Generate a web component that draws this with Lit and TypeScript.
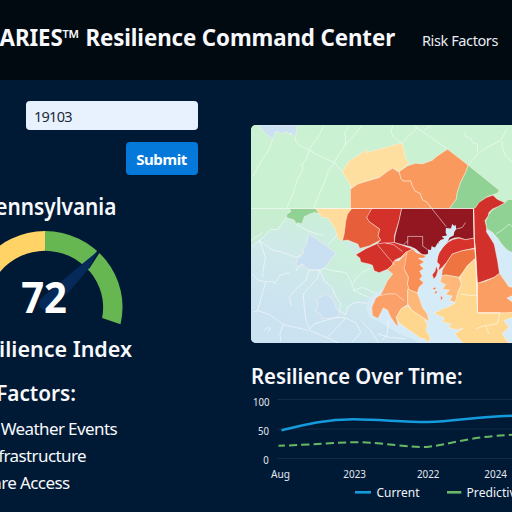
import { LitElement, html, svg, css } from "lit";
import { customElement } from "lit/decorators.js";

type Region = { fill: string; d: string };

const REGIONS: Region[] = [
  // upper-left lake district
  { fill: "#cbe1f1", d: "M35 12L62 40 80 55 90 30 105 38 120 32 135 42 132 34 140 40 148 50 155 12Z" },
  // pale blue inland counties
  { fill: "#c9dff2", d: "M188 338L235 370 270 398 235 442 225 448 190 448 170 430 158 438 150 432 152 418 172 400 175 380 182 370Z" },
  { fill: "#c9dff2", d: "M240 520L262 535 270 560 282 580 270 592 230 594 222 578 208 570 218 550 212 536Z" },
  // northern belt
  { fill: "#ffdf9f", d: "M289 152L310 120 350 95 366 84 362 96 380 90 468 66 475 85 478 110 490 126 461 152 441 142 420 160 401 168 360 181 335 190 316 202 312 190Z" },
  { fill: "#fa9a5f", d: "M314 263V205L335 190 360 182 401 170 425 152 441 142 461 155 465 172 472 180 495 180 500 195 508 210 524 218 530 236 545 245 558 263Z" },
  { fill: "#fa995d", d: "M461 152L485 135 510 127 530 129 560 118 575 105 606 85 668 133 660 155 645 185 635 215 632 235 612 263H558L545 245 530 236 524 218 508 210 500 195 495 180 472 180 465 172Z" },
  { fill: "#90d294", d: "M668 133L761 208 755 218 740 222 720 230 700 248 690 263H612L632 235 635 215 645 185 660 155Z" },
  { fill: "#90d294", d: "M130 263H210L228 279 205 275 190 280 175 288 168 310 158 306 150 308 145 298 122 290 122 282 135 272Z" },
  { fill: "#ffdc9b", d: "M208 263H318L305 285 298 320 295 345 290 360 276 354 270 328 252 300 246 290 230 290Z" },
  // centre
  { fill: "#e75f3a", d: "M318 263H378L372 280 363 290 370 302 385 313 402 325 397 345 405 358 370 376 342 383 336 370 320 364 306 358 290 360 295 340 300 300 305 280Z" },
  { fill: "#d4312b", d: "M378 263H468L460 300 446 345 446 365 501 385 480 395 465 410 448 418 438 435 425 446 400 456 385 450 380 434 370 430 352 426 345 424 342 412 330 402 360 384 395 368 405 358 397 345 402 325 385 313 370 302 363 290Z" },
  { fill: "#921721", d: "M468 263H684L686 352 660 357 640 350 626 352 612 358 602 366 592 362 580 362 578 375 562 383 552 392 545 402 530 402 510 385 495 378 470 372 446 365 448 345 460 300Z" },
  { fill: "#f98f56", d: "M501 385L512 396 540 405 536 412 518 413 536 424 522 432 534 444 522 452 530 466 522 476 534 486 520 500 515 517 490 508 485 490 488 470 475 445 460 420 480 395Z" },
  { fill: "#fba068", d: "M484 396L460 420 446 420 438 435 425 447 441 460 425 480 416 500 405 522 390 532 378 560 380 585 396 594 406 576 412 562 425 568 435 590 450 612 458 618 452 590 466 565 486 552 486 510 490 508 485 490 488 470 475 445Z" },
  { fill: "#fdb878", d: "M486 505L515 517 522 535 530 560 545 580 550 602 536 594 518 582 500 570 486 550Z" },
  { fill: "#fed68e", d: "M466 565L486 556 500 570 518 582 536 594 545 615 541 630 553 650 551 665 540 658 520 650 500 635 480 622 458 605 452 590Z" },
  // peninsula
  { fill: "#90d294", d: "M801 236L788 236 778 246 760 256 740 268 730 280 720 302 724 324 742 336 756 352 768 370 785 388 801 396Z" },
  { fill: "#d2302b", d: "M684 263L690 260 700 245 722 230 742 223 755 235 778 246 760 256 740 265 730 275 728 285 718 300 722 315 724 335 746 370 756 420 762 458 746 470 696 488 690 400 686 352Z" },
  { fill: "#fb9e63", d: "M696 488L720 482 746 470 762 458 776 478 790 498 801 500V525L784 532 801 545V577H696Z" },
  { fill: "#d7322c", d: "M622 356L640 352 660 357 686 352 687 382 650 390 620 400 604 424 590 440 578 450 582 432 574 424 578 398 590 380 608 364Z" },
  { fill: "#ee7542", d: "M687 384L690 412 665 435 652 455 640 470 600 463 588 466 590 448 604 424 620 400 650 390Z" },
  { fill: "#fdb87a", d: "M588 466L600 463 640 470 648 492 638 512 630 545 612 540 620 526 600 522 612 508 590 506 600 492 584 484Z" },
  { fill: "#fed891", d: "M668 433L690 414 694 488 696 577H780L801 575V590L775 600 790 620 770 640 790 669H655L640 655 628 640 654 622 634 628 610 622 616 610 590 604 596 592 565 578 590 565 606 560 628 548 638 512 648 492 643 472 652 455Z" },
  // islands
  { fill: "#d7322c", d: "M572 436L577 450 572 466 564 476 560 462 568 452Z" },
  { fill: "#ec6a48", d: "M560 502L572 500 568 508 576 514 566 522 570 510ZM584 524L592 532 586 540Z" },
];

const WATER =
  "M600 335L601 322 616 323 620 310 626 316 630 312 632 325 626 334 624 344 612 350 606 362 594 378 582 395 574 415 566 436 556 440 550 425 552 410 538 404 548 399 546 386 556 388 558 376 568 382 576 366 580 372 584 358 596 354 588 347 604 344Z" +
  "M720 330L742 338 756 354 768 370 785 388 801 398V494L788 490 776 474 762 456 758 420 748 374 736 350Z";

const BORDERS = [
  "M15 263H684",
  "M80 55L70 85 50 115 40 130 30 150 20 168",
  "M148 50L150 62 165 75 190 88 182 112 168 132 172 145 155 175 140 220 122 263",
  "M235 12L222 40 200 70 190 88 230 110 265 124 289 152",
  "M265 124L245 155 238 180 222 215 203 263",
  "M265 124L298 72 325 42 350 12M298 72L300 45 296 38 310 12",
  "M441 12L436 35 446 50 456 57 468 66 514 20 606 85M536 28L556 12M514 20L505 12",
  "M668 133L696 100 720 82 766 58 785 22M770 60L770 78 780 105 801 125",
  "M658 35L661 48 676 52 681 65 696 70 696 95",
  "M18 378L40 360 75 325 95 327 122 290M40 360L80 388 110 395 150 410 165 403",
  "M40 360L52 390 58 412 50 455 52 470",
  "M18 460L36 478 60 484 52 510 35 570 20 575M60 484L82 482 86 490 102 464 130 456M35 570L70 582 112 612 145 620 190 630",
  "M190 448L180 480 155 500 130 530 136 555M190 448H222L215 472 190 500 172 520 175 560 180 600 192 626 205 610 270 590 300 592",
  "M225 448L232 442 270 452 300 455 315 480 325 510 345 520 370 530M222 448L235 480 258 500 268 525 285 550 280 570 300 582 306 558 330 545 365 548",
  "M330 475L350 455 372 445M330 475L322 490M322 510L350 500 395 520",
  "M300 592L270 625 245 650M300 592L330 606 345 635 320 665M345 600L375 630 400 669M112 612L102 640 105 665M192 630L240 650 280 668",
  "M150 310L185 330 232 345M170 430L155 440 150 452M55 630L62 622 75 622 66 635",
  "M248 372L275 340M15 360L50 335",
  "M558 263L580 290 602 318M632 325L650 320 660 305M486 372V347H531V376L545 386M486 360L474 372",
  "M395 370L418 366 444 372 470 392M395 372L412 392 425 408 447 432M446 365L420 368",
  "M402 525L425 520 450 520 475 540M751 340L770 328 791 310 801 318",
  "M764 577L755 610 720 615 690 625M720 615L730 640M645 520L670 524 694 524",
  "M410 660L425 640 428 600M396 640L430 650 480 655",
];

@customElement("risk-map")
export class RiskMap extends LitElement {
  static styles = css`
    :host { display: block; width: 261.5px; height: 218.5px; margin-left: 0.5px; border-radius: 5px 0 0 5px; overflow: hidden; }
    svg { display: block; width: 100%; height: 100%; }
  `;
  render() {
    return html`<svg viewBox="15 12 786 657" preserveAspectRatio="none">
      <defs>
        <linearGradient id="land" gradientUnits="userSpaceOnUse" x1="250" y1="270" x2="150" y2="600">
          <stop offset="0" stop-color="#caf0d6" />
          <stop offset="0.45" stop-color="#cfe9ea" />
          <stop offset="1" stop-color="#cbe2f1" />
        </linearGradient>
        <linearGradient id="mid" gradientUnits="userSpaceOnUse" x1="350" y1="420" x2="280" y2="600">
          <stop offset="0" stop-color="#cbf0d8" />
          <stop offset="1" stop-color="#cbe6ea" />
        </linearGradient>
      </defs>
      <rect x="15" y="12" width="786" height="657" fill="#d5ecf8" />
      <rect x="15" y="12" width="786" height="251" fill="#c9f1d2" />
      <path fill="#c9f1d2" d="M684 240H801V300H700Z" />
      <path fill="url(#land)" d="M15 263H400L446 400 441 460 416 500 396 515 372 530 362 560 370 590 405 606 430 622 470 645 500 655 520 669H15Z" />
      <path fill="url(#mid)" d="M278 355L345 420 400 455 441 460 416 500 370 530 325 545 300 582 280 575 262 510 225 448 270 398 248 372Z" />
      <path fill="#c4efc5" d="M15 263V375L75 328 95 327 122 290 130 263Z" opacity="0.55" />
      ${REGIONS.map((r) => svg`<path d=${r.d} fill=${r.fill} stroke="#fff3e4" stroke-opacity="0.8" stroke-width="1.8" stroke-linejoin="round" />`)}
      <path d=${WATER} fill="#d5ecf8" />
      <g fill="none" stroke="#fff" stroke-opacity="0.72" stroke-width="2.2" stroke-linejoin="round">
        ${BORDERS.map((d) => svg`<path d=${d} />`)}
      </g>
      <path d="M684 263L686 352 690 400 696 577H764" fill="none" stroke="#fff3e4" stroke-width="3" />
    </svg>`;
  }
}

@customElement("index-gauge")
export class IndexGauge extends LitElement {
  static styles = css`
    :host { display: block; position: relative; width: 158px; height: 95px; }
    svg { display: block; width: 158px; height: 95px; }
    .value {
      position: absolute; left: 0; right: 2px; top: 42px; transform: scaleX(0.94);
      font-size: 42.5px; line-height: 48px; font-weight: 700; text-align: center; color: #fff;
    }
  `;
  render() {
    return html`<svg viewBox="-33.7 231 158 95">
        <path fill="#ffd365" d="M45.3 231A78.4 76 0 0 0 -30.1 324.1L-11.7 317.7A58.7 56.6 0 0 1 45.3 250.8Z" />
        <path fill="#66b752" d="M45.3 231A78.4 76 0 0 1 120.8 324.2L102.4 318A58.7 56.6 0 0 0 45.3 250.8Z" />
        <path fill="#001a37" d="M98 250.3L100 252.5 89.5 268.8 85 266Z" />
        <path fill="#052a5a" d="M98 251.3L83 263.4 62 281 41 299Q38 304 41 308 45 312 49 308L70 291 88.8 268.8Z" />
      </svg>
      <div class="value">72</div>`;
  }
}

@customElement("trend-chart")
export class TrendChart extends LitElement {
  static styles = css`
    :host { display: block; width: 262px; height: 112px; }
    svg { display: block; overflow: hidden; }
    .tick { font-size: 11px; fill: #e3e9f1; }
    .key { font-size: 12.5px; fill: #f0f4f9; }
    .grid { stroke: #122a47; stroke-width: 1; }
  `;
  render() {
    const ys = [["100", 253, 404, 16.5], ["50", 258, 433.5, 11], ["0", 263.2, 462.5, 5.5]] as const;
    const xs = [["Aug", 271, 19], ["2023", 343.3, 22.7], ["2022", 417, 22.5], ["2024", 484.3, 22.7]] as const;
    return html`<svg width="262" height="112" viewBox="250 392 262 112">
      ${[399.5, 429, 458.5].map((y) => svg`<path class="grid" d="M277 ${y}H512" />`)}
      ${ys.map(([t, x, y, w]) => svg`<text class="tick" x=${x} y=${y + 1.5} textLength=${w} lengthAdjust="spacingAndGlyphs">${t}</text>`)}
      ${xs.map(([t, x, w]) => svg`<text class="tick" x=${x} y="477.5" textLength=${w} lengthAdjust="spacingAndGlyphs">${t}</text>`)}
      <path d="M281.5 430.3C303 425 325 419.2 354 419.2 380 419.4 405 422.2 428 422 455 421.5 475 416.6 512 415.8" fill="none" stroke="#149bdc" stroke-width="2.5" />
      <path d="M278.5 445.7C310 445 335 442.3 360 442.2 385 443 410 447.5 426 447 450 444.5 470 436.5 512 434.8" fill="none" stroke="#67b966" stroke-width="2" stroke-dasharray="8.2 4.1" stroke-dashoffset="2" />
      <path d="M355 492.3H371" stroke="#149bdc" stroke-width="2.6" />
      <text class="key" x="376.5" y="497" textLength="43" lengthAdjust="spacingAndGlyphs">Current</text>
      <path d="M447 492.3H461.3" stroke="#67b966" stroke-width="2.6" />
      <text class="key" x="466.5" y="497" textLength="56" lengthAdjust="spacingAndGlyphs">Predictive</text>
    </svg>`;
  }
}

@customElement("app-root")
export class AppRoot extends LitElement {
  static styles = css`
    :host {
      display: flex; flex-direction: column; width: 512px; height: 512px; overflow: hidden;
      background: #001935; color: #f7f9fc; font-family: "Noto Sans", "Open Sans", sans-serif;
    }
    * { box-sizing: border-box; }
    header {
      height: 80px; flex: none; display: flex; align-items: baseline; padding-top: 22px;
      background: #010911; white-space: nowrap;
    }
    .brand {
      width: 395px; flex: none; display: flex; justify-content: flex-end;
      font-size: 22.3px; line-height: 32px; font-weight: 700; letter-spacing: -0.1px; white-space: pre;
    }
    .tm { font-weight: 400; }
    .nav { margin-left: 27px; font-size: 14.5px; letter-spacing: -0.4px; color: #e9edf2; }
    main { display: flex; flex: 1; min-height: 0; padding-top: 21px; }
    .side { width: 250px; flex: none; white-space: nowrap; }
    form { width: 171.5px; margin-left: 26px; display: flex; flex-direction: column; align-items: flex-end; }
    .zip {
      width: 100%; height: 28.5px; padding: 0 8px; border-radius: 4px; background: #e8f2fe;
      color: #1c2939; font-size: 14.5px; line-height: 30px; letter-spacing: -0.75px;
    }
    .submit {
      margin-top: 12.5px; width: 72px; height: 33px; padding: 0; border: 0; border-radius: 4px;
      background: #0479d9; color: #fff; font: 700 15px/34px "Noto Sans", sans-serif; letter-spacing: -0.4px;
    }
    .score { width: 90.6px; margin-top: 20px; display: flex; flex-direction: column; align-items: center; }
    h2 { margin: 0; font-size: 22.3px; line-height: 24px; font-weight: 600; }
    .place { font-size: 22.5px; transform: translateX(4px) scaleX(0.925); }
    .caption { transform: translateX(2px) scaleX(0.965); }
    index-gauge { margin: 12px 0 11px; }
    .row { display: flex; justify-content: flex-end; }
    .factors { margin-top: 20px; width: 76px; transform: scaleX(0.93); transform-origin: right; }
    ul { list-style: none; margin: 9.5px 0 0; padding: 0; }
    li { font-size: 17px; line-height: 27.3px; letter-spacing: -0.6px; }
    .detail { width: 262px; flex: none; padding-top: 23.5px; }
    .trend { margin: 21px 0 4px 1px; white-space: nowrap; transform: scaleX(0.91); transform-origin: left; }
  `;
  private factors = [
    { name: "Extreme Weather Events", end: 117 },
    { name: "Aging Infrastructure", end: 86 },
    { name: "Healthcare Access", end: 69.5 },
  ];
  render() {
    return html`
      <header>
        <div class="brand">ARIES<span class="tm">™</span> Resilience Command Center</div>
        <div class="nav">Risk Factors</div>
      </header>
      <main>
        <section class="side">
          <form>
            <div class="zip">19103</div>
            <button class="submit" type="button">Submit</button>
          </form>
          <div class="score">
            <h2 class="place">Pennsylvania</h2>
            <index-gauge></index-gauge>
            <h2 class="caption">Resilience Index</h2>
          </div>
          <h2 class="row factors">Key Factors:</h2>
          <ul>
            ${this.factors.map((f) => html`<li class="row" style="width:${f.end}px">${f.name}</li>`)}
          </ul>
        </section>
        <section class="detail">
          <risk-map></risk-map>
          <h2 class="trend">Resilience Over Time:</h2>
          <trend-chart></trend-chart>
        </section>
      </main>`;
  }
}
